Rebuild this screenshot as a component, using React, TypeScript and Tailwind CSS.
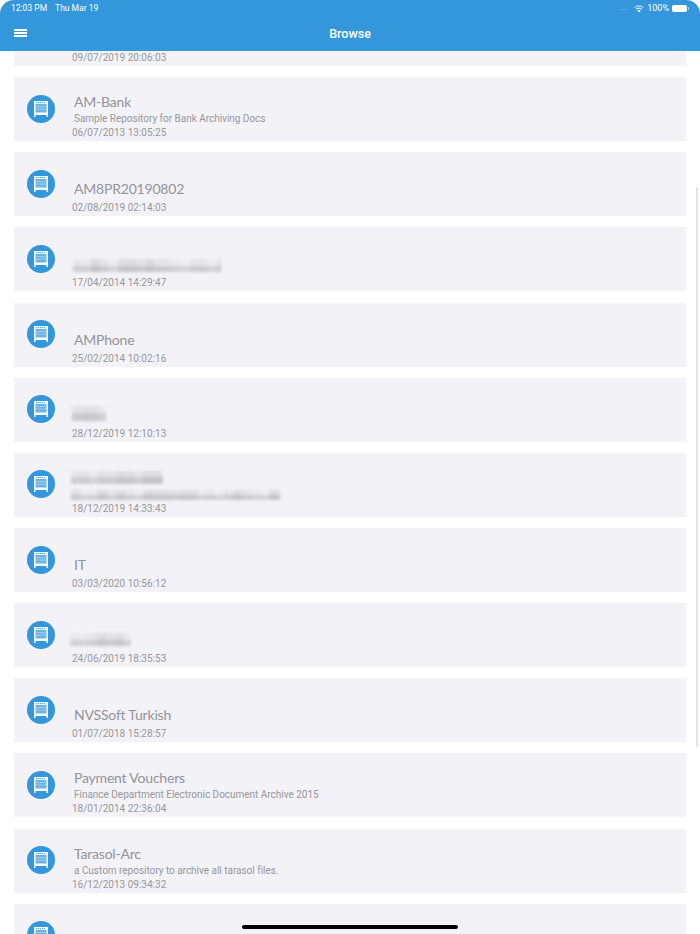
const rows = [
  { title: "AM-Bank", sub: "Sample Repository for Bank Archiving Docs", date: "06/07/2013 13:05:25" },
  { title: "AM8PR20190802", date: "02/08/2019 02:14:03" },
  { blur: { w: 148, x: 1, b: 5, h: 13, seed: 3 }, date: "17/04/2014 14:29:47" },
  { title: "AMPhone", date: "25/02/2014 10:02:16" },
  { blur: { w: 34, x: 0, b: 7, h: 15, seed: 5 }, date: "28/12/2019 12:10:13" },
  { blurTwo: true, date: "18/12/2019 14:33:43" },
  { title: "IT", date: "03/03/2020 10:56:12" },
  { blur: { w: 61, x: -2, b: 7, h: 13, seed: 2 }, date: "24/06/2019 18:35:53" },
  { title: "NVSSoft Turkish", date: "01/07/2018 15:28:57" },
  { title: "Payment Vouchers", sub: "Finance Department Electronic Document Archive 2015", date: "18/01/2014 22:36:04" },
  { title: "Tarasol-Arc", sub: "a Custom repository to archive all tarasol files.", date: "16/12/2013 09:34:32" },
];

function ArchiveIcon() {
  return (
    <div className="flex size-7 shrink-0 items-center justify-center rounded-full bg-[#3497dc]">
      <svg width="18" height="16" viewBox="0 0 18 16">
        <path fill="#fff" d="M2 0h14v16h-1.500v-2h-11v2H2z" />
        <rect x="3.500" y="3" width="11" height="8.500" fill="#6fb3e4" />
        <path stroke="#3497dc" strokeWidth="1" strokeDasharray="1 1" d="M4 1.700h10" />
        <path stroke="#bcdcf3" strokeWidth="0.6" d="M3.500 5.500h11M3.500 8h11" />
      </svg>
    </div>
  );
}

// pixelated gray strip standing in for the redacted names
function Redacted({ width, seed, height = 14 }: { width: number; seed: number; height?: number }) {
  const cells = Array.from({ length: Math.ceil(width / 9) }, (_, i) => {
    const v = (i * 7 + seed * 11 + ((i * i * seed) % 13)) % 10;
    return 236 - v * 2;
  });
  return (
    <div className="flex flex-col overflow-hidden blur-[1.500px]" style={{ width, height }}>
      <div className="flex flex-1">
        {cells.map((c, i) => (
          <div key={i} className="h-full w-[9px] shrink-0" style={{ backgroundColor: `rgb(${c + 2},${c + 2},${c + 6})` }} />
        ))}
      </div>
      <div className="flex flex-1">
        {cells.map((c, i) => (
          <div key={i} className="h-full w-[9px] shrink-0" style={{ backgroundColor: `rgb(${c - 22},${c - 22},${c - 19})` }} />
        ))}
      </div>
    </div>
  );
}

function Row({ row }: { row: (typeof rows)[number] }) {
  return (
    <div className="mb-[11.15px] flex h-16 bg-[#f2f2f7] pl-[13px]">
      <div className="pt-[17.600px]">
        <ArchiveIcon />
      </div>
      <div className="flex flex-1 flex-col justify-end pb-[2px] pl-[17px]">
        {row.title && (
          <p className={`ml-[2px] font-['Lato',sans-serif] text-[14px] leading-[18px] tracking-[-0.2px] text-[#949499] ${row.sub ? "mb-px" : "mb-[4px]"}`}>
            {row.title}
          </p>
        )}
        {row.sub && <p className="mb-[2px] ml-[2px] text-[10px] leading-[13px] tracking-[-0.02px] text-[#98989d]">{row.sub}</p>}
        {row.blur && (
          <div style={{ marginLeft: row.blur.x, marginBottom: row.blur.b }}>
            <Redacted width={row.blur.w} seed={row.blur.seed} height={row.blur.h} />
          </div>
        )}
        {row.blurTwo && (
          <div className="-ml-px mb-[3px] flex flex-col gap-[6px]">
            <Redacted width={92} seed={4} height={13} />
            <Redacted width={209} seed={7} height={10} />
          </div>
        )}
        <p className="text-[10px] leading-3 text-[#98989d]">{row.date}</p>
      </div>
    </div>
  );
}

export default function App() {
  return (
    <div className="relative h-[934px] w-[700px] overflow-hidden bg-white font-['Roboto',sans-serif]">
      <header className="relative z-10 h-[51px] rounded-t-[14px] bg-[#3497dc] text-white">
        <div className="flex h-4 items-center justify-between pl-[11px] pr-[11px] pt-[1px] text-[8.500px]">
          <div className="flex gap-2">
            <span>12:03 PM</span>
            <span>Thu Mar 19</span>
          </div>
          <div className="flex items-center gap-[3px]">
            <span className="mr-[1px] text-[7px] tracking-[1px] text-[#a9d2ef]">....</span>
            <svg width="10" height="8" viewBox="0 0 10 8" fill="none" stroke="#fff">
              <path d="M.5 2.600C3 .4 7 .4 9.500 2.600M2 4.200c1.700-1.400 4.300-1.400 6 0" />
              <path fill="#fff" stroke="none" d="M3.300 5.400 5 7.500l1.700-2.100c-1-.7-2.400-.7-3.400 0z" />
            </svg>
            <span className="text-[9px]">100%</span>
            <div className="flex items-center">
              <div className="h-[7px] w-[15px] rounded-[2px] bg-white" />
              <div className="ml-[1px] h-[3px] w-[1px] bg-[#a9d2ef]" />
            </div>
          </div>
        </div>
        <div className="relative flex h-[35px] items-center justify-center pt-[1px]">
          <div className="absolute left-[14px] top-[13px] flex w-[13px] flex-col gap-[1.500px]">
            <div className="h-[1.500px] bg-white" />
            <div className="h-[1.500px] bg-white" />
            <div className="h-[1.500px] bg-white" />
          </div>
          <span className="text-[12.500px] font-medium">Browse</span>
        </div>
      </header>

      <main className="mx-[14px] h-[883px] overflow-hidden">
        <div className="mb-[11.15px] flex h-[15px] items-end bg-[#f2f2f7] pb-[2px] pl-[58px]">
          <p className="text-[10px] leading-3 text-[#98989d]">09/07/2019 20:06:03</p>
        </div>
        {rows.map((row) => (
          <Row key={row.date} row={row} />
        ))}
        <div className="flex h-16 bg-[#f2f2f7] pl-[13px] pt-[17.600px]">
          <ArchiveIcon />
        </div>
      </main>

      <div className="absolute right-[2px] top-[187px] h-[560px] w-[2px] rounded-full bg-[#e4e4e4]" />
      <div className="absolute bottom-[5px] left-[242px] h-1 w-[216px] rounded-full bg-black" />
    </div>
  );
}
